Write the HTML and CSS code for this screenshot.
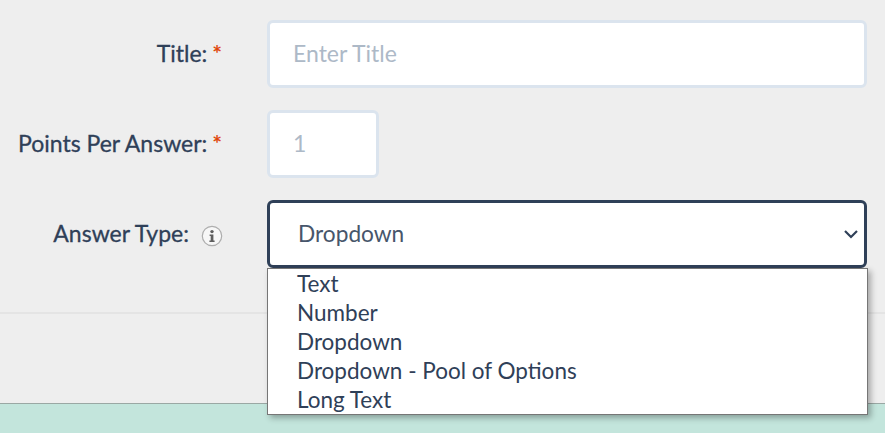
FILE: index.html
```html
<!DOCTYPE html>
<html lang="en">
<head>
  <meta charset="UTF-8">
  <meta name="viewport" content="width=device-width, initial-scale=1.0">
  <title>Question Form</title>
  <link rel="stylesheet" href="styles.css">
</head>
<body>
  <form class="question-form">
    <div class="form-row">
      <label class="form-label" for="title">Title: <span class="required">*</span></label>
      <input class="form-input" id="title" type="text" placeholder="Enter Title">
    </div>
    <div class="form-row">
      <label class="form-label" for="points">Points Per Answer: <span class="required">*</span></label>
      <input class="form-input form-input-small" id="points" type="text" placeholder="1">
    </div>
    <div class="form-row">
      <label class="form-label form-label-info" for="answer-type">
        Answer Type:
        <svg class="info-icon" width="22" height="22" viewBox="0 0 22 22">
          <circle cx="11" cy="11" r="9.7" fill="#f7f7f7" stroke="#aeaeae" stroke-width="1.2"/>
          <circle cx="11" cy="6.6" r="1.7" fill="#5f5f5f"/>
          <path d="M8.6 9.4h3.8v6h1.2v1.5H8.4v-1.5h1.3v-4.5H8.6z" fill="#5f5f5f"/>
        </svg>
      </label>
      <div class="select-wrap">
        <div class="select-box" id="answer-type">
          <span>Dropdown</span>
          <svg class="select-arrow" width="16" height="10" viewBox="0 0 16 10">
            <path d="M2 2l6 6 6-6" fill="none" stroke="#2f4058" stroke-width="2.2"/>
          </svg>
        </div>
        <ul class="select-menu">
          <li>Text</li>
          <li>Number</li>
          <li>Dropdown</li>
          <li>Dropdown - Pool of Options</li>
          <li>Long Text</li>
        </ul>
      </div>
    </div>
  </form>
  <div class="footer-space"></div>
  <div class="teal-band"></div>
</body>
</html>
```

FILE: styles.css
```css
html, body {
  margin: 0;
  height: 433px;
  overflow: hidden;
}
body {
  font-family: Lato, "Liberation Sans", sans-serif;
  background-color: #eeeeee;
  color: #2f4058;
}
.question-form {
  padding: 20px 18px 44px 0;
  display: flex;
  flex-direction: column;
  gap: 22px;
  border-bottom: 2px solid #e4e4e4;
}
.form-row {
  display: flex;
  align-items: center;
  height: 68px;
}
.form-label {
  width: 222px;
  margin-right: 45px;
  padding-bottom: 2px;
  text-align: right;
  font-size: 23px;
  -webkit-text-stroke: 0.3px #2f4058;
  white-space: nowrap;
}
.required {
  margin-left: -1px;
  color: #e0470c;
  font-weight: 700;
  -webkit-text-stroke: 0;
}
.form-label-info {
  display: flex;
  align-items: center;
  justify-content: flex-end;
  gap: 12px;
}
.info-icon {
  flex: none;
  margin-right: -1px;
  margin-top: 5px;
}
.form-input {
  flex: 1;
  height: 68px;
  box-sizing: border-box;
  padding: 0 23px 2px;
  border: 3px solid #dbe4ee;
  border-radius: 6px;
  background-color: #fff;
  font-family: inherit;
  font-size: 23px;
  color: #2f4058;
}
.form-input::placeholder {
  color: #adb9c7;
  opacity: 1;
}
.form-input-small {
  flex: none;
  width: 112px;
}
.select-wrap {
  flex: 1;
  position: relative;
}
.select-box {
  height: 68px;
  box-sizing: border-box;
  padding: 0 5px 2px 28px;
  border: 3px solid #2f4058;
  border-radius: 6px;
  background-color: #fff;
  display: flex;
  align-items: center;
  justify-content: space-between;
  font-size: 22.7px;
  color: #47566b;
}
.select-arrow {
  margin-top: 2px;
}
.select-menu {
  position: absolute;
  top: 68px;
  left: 0;
  right: -1px;
  margin: 0;
  padding: 0;
  height: 147px;
  box-sizing: border-box;
  list-style: none;
  background-color: #fff;
  border: 1px solid #767676;
  box-shadow: 3px 3px 6px rgba(0, 0, 0, 0.3);
  font-size: 22.5px;
  line-height: 29px;
}
.select-menu li {
  padding-left: 29px;
}
.footer-space {
  height: 89px;
}
.teal-band {
  height: 30px;
  background-color: #c3e5dc;
  border-top: 1px solid #9aa8a4;
}
```
